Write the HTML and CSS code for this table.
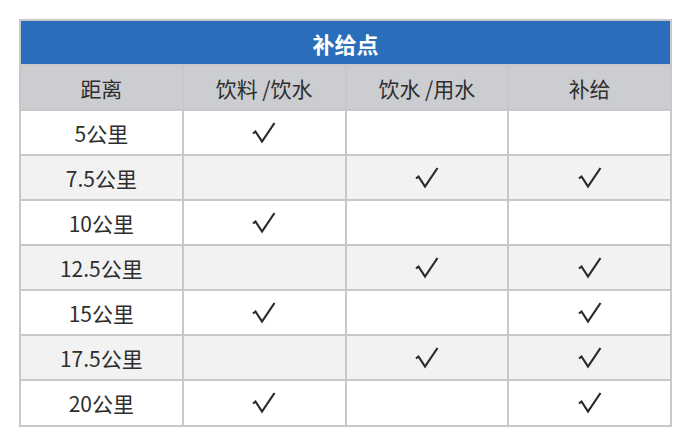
FILE: index.html
```html
<!DOCTYPE html>
<html lang="zh">
<head>
<meta charset="utf-8">
<link rel="stylesheet" href="styles.css">
</head>
<body>
<table class="supply">
  <colgroup><col><col><col><col></colgroup>
  <thead>
    <tr class="title"><th colspan="4">补给点</th></tr>
    <tr class="head"><th>距离</th><th>饮料 /饮水</th><th>饮水 /用水</th><th>补给</th></tr>
  </thead>
  <tbody>
    <tr><td>5公里</td><td><svg class="check" viewBox="0 0 26 24" aria-label="√"><path d="M2 12.5 L4.5 10.5 L11 20.5 L23.5 2"/></svg></td><td></td><td></td></tr>
    <tr class="alt"><td>7.5公里</td><td></td><td><svg class="check" viewBox="0 0 26 24" aria-label="√"><path d="M2 12.5 L4.5 10.5 L11 20.5 L23.5 2"/></svg></td><td><svg class="check" viewBox="0 0 26 24" aria-label="√"><path d="M2 12.5 L4.5 10.5 L11 20.5 L23.5 2"/></svg></td></tr>
    <tr><td>10公里</td><td><svg class="check" viewBox="0 0 26 24" aria-label="√"><path d="M2 12.5 L4.5 10.5 L11 20.5 L23.5 2"/></svg></td><td></td><td></td></tr>
    <tr class="alt"><td>12.5公里</td><td></td><td><svg class="check" viewBox="0 0 26 24" aria-label="√"><path d="M2 12.5 L4.5 10.5 L11 20.5 L23.5 2"/></svg></td><td><svg class="check" viewBox="0 0 26 24" aria-label="√"><path d="M2 12.5 L4.5 10.5 L11 20.5 L23.5 2"/></svg></td></tr>
    <tr><td>15公里</td><td><svg class="check" viewBox="0 0 26 24" aria-label="√"><path d="M2 12.5 L4.5 10.5 L11 20.5 L23.5 2"/></svg></td><td></td><td><svg class="check" viewBox="0 0 26 24" aria-label="√"><path d="M2 12.5 L4.5 10.5 L11 20.5 L23.5 2"/></svg></td></tr>
    <tr class="alt"><td>17.5公里</td><td></td><td><svg class="check" viewBox="0 0 26 24" aria-label="√"><path d="M2 12.5 L4.5 10.5 L11 20.5 L23.5 2"/></svg></td><td><svg class="check" viewBox="0 0 26 24" aria-label="√"><path d="M2 12.5 L4.5 10.5 L11 20.5 L23.5 2"/></svg></td></tr>
    <tr class="last"><td>20公里</td><td><svg class="check" viewBox="0 0 26 24" aria-label="√"><path d="M2 12.5 L4.5 10.5 L11 20.5 L23.5 2"/></svg></td><td></td><td><svg class="check" viewBox="0 0 26 24" aria-label="√"><path d="M2 12.5 L4.5 10.5 L11 20.5 L23.5 2"/></svg></td></tr>
  </tbody>
</table>
</body>
</html>
```
FILE: styles.css
```css
html, body {
  margin: 0;
  background: #ffffff;
}
body {
  padding: 19px 0 0 19px;
  font-family: "Noto Sans CJK SC", "Noto Sans", sans-serif;
  color: #2e2e2e;
}
.supply {
  border-collapse: collapse;
  table-layout: fixed;
  width: 653px;
  border: 2px solid #d0d0d0;
}
.supply th, .supply td {
  border: 2px solid #c8c8c8;
  padding: 0;
  text-align: center;
  vertical-align: middle;
  font-size: 21px;
  font-weight: normal;
  line-height: 24px;
}
.title th {
  background: #2a6ebb;
  color: #ffffff;
  font-weight: bold;
  font-size: 22px;
  height: 43px;
}
.head th {
  background: #cbcdd0;
  color: #2e2e2e;
  height: 43px;
}
.supply td {
  height: 43px;
  background: #ffffff;
}
.supply tr.alt td {
  background: #f2f2f2;
}
.supply tr.last td {
  height: 44px;
}
.check {
  display: block;
  width: 26px;
  height: 24px;
  margin: 0 auto;
  fill: none;
  stroke: #2a2a2a;
  stroke-width: 2.2;
  stroke-linejoin: miter;
  stroke-linecap: butt;
}
```
